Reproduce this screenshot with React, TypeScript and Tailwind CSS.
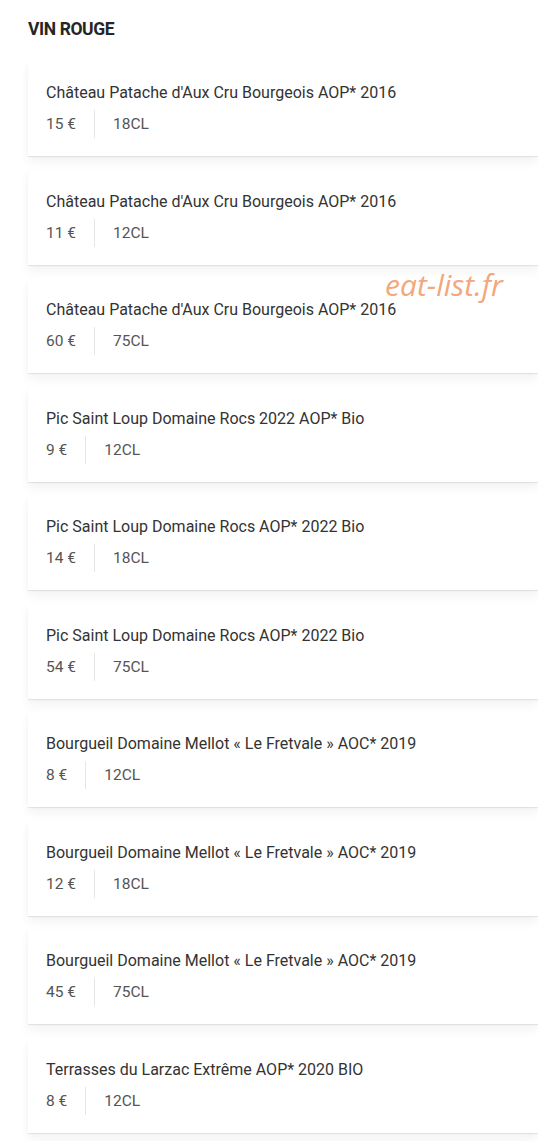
const wines = [
    { name: "Château Patache d'Aux Cru Bourgeois AOP* 2016", price: "15 €", size: "18CL" },
    { name: "Château Patache d'Aux Cru Bourgeois AOP* 2016", price: "11 €", size: "12CL" },
    { name: "Château Patache d'Aux Cru Bourgeois AOP* 2016", price: "60 €", size: "75CL" },
    { name: "Pic Saint Loup Domaine Rocs 2022 AOP* Bio", price: "9 €", size: "12CL" },
    { name: "Pic Saint Loup Domaine Rocs AOP* 2022 Bio", price: "14 €", size: "18CL" },
    { name: "Pic Saint Loup Domaine Rocs AOP* 2022 Bio", price: "54 €", size: "75CL" },
    { name: "Bourgueil Domaine Mellot « Le Fretvale » AOC* 2019", price: "8 €", size: "12CL" },
    { name: "Bourgueil Domaine Mellot « Le Fretvale » AOC* 2019", price: "12 €", size: "18CL" },
    { name: "Bourgueil Domaine Mellot « Le Fretvale » AOC* 2019", price: "45 €", size: "75CL" },
    { name: "Terrasses du Larzac Extrême AOP* 2020 BIO", price: "8 €", size: "12CL" },
]

function WineCard({ name, price, size }: { name: string, price: string, size: string }) {
    return (
        <div className="h-[95px] bg-white pl-[18px] pt-[20px] shadow-[0_1px_1px_rgba(0,0,0,0.08),0_6px_10px_rgba(0,0,0,0.05)]">
            <div className="text-[16px] leading-[24px] text-[#333]">{name}</div>
            <div className="mt-[5px] flex items-center text-[15.5px] leading-[28px] text-[#555]">
                <span className="pr-[18px]">{price}</span>
                <span className="h-[28px] w-px bg-[#e6e6e6]" />
                <span className="pl-[18px]">{size}</span>
            </div>
        </div>
    )
}

export default function App() {
    return (
        <div className="relative min-h-[1141px] bg-white pl-[28px] pt-[19px]" style={{ fontFamily: "Roboto, 'Liberation Sans', sans-serif" }}>
            <h2 className="text-[17.5px] font-bold leading-[20px] tracking-[-0.4px] text-[#262626]">VIN ROUGE</h2>
            <div className="mt-[22px] flex flex-col gap-[13.5px]">
                {wines.map((w, i) => (
                    <WineCard key={i} {...w} />
                ))}
            </div>
            <div className="absolute left-[385px] top-[262px] text-[30px] italic text-[#f3a77c]" style={{ fontFamily: "'Open Sans', sans-serif" }}>
                eat-list.fr
            </div>
        </div>
    )
}
